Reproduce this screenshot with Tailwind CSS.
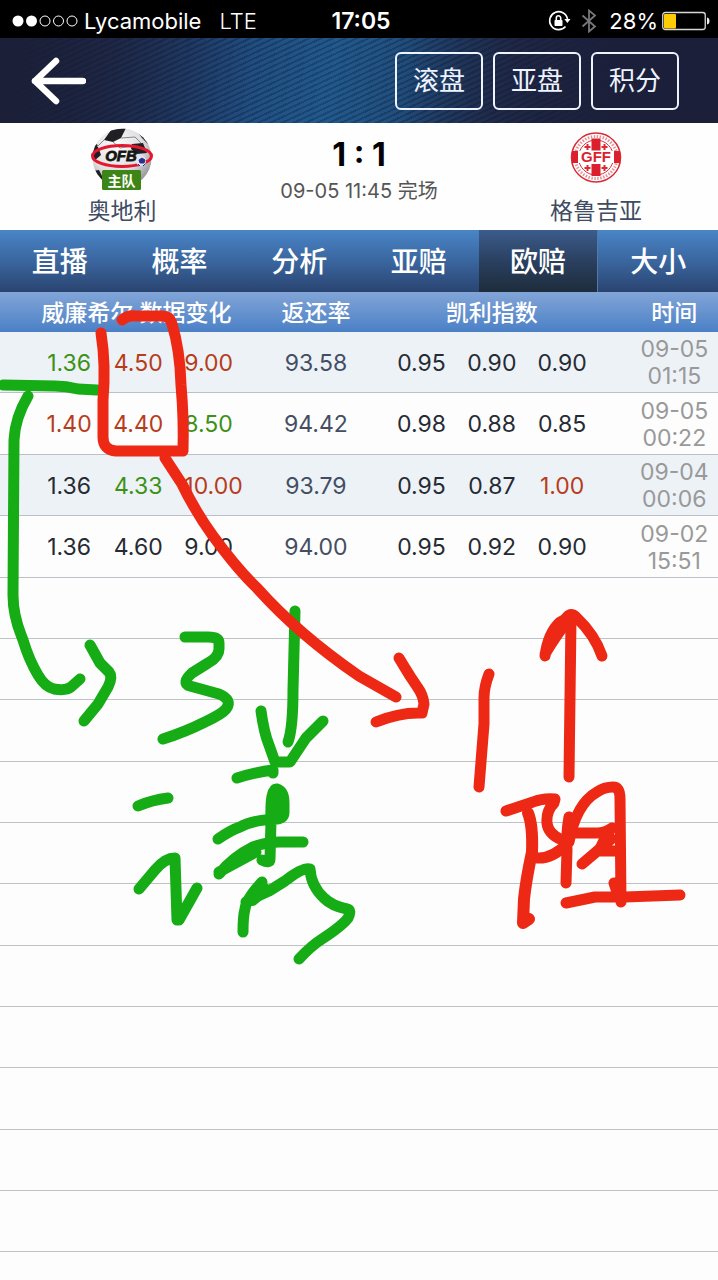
<!DOCTYPE html>
<html lang="zh-CN">
<head>
<meta charset="utf-8">
<meta name="viewport" content="width=device-width, initial-scale=1">
<title>奥地利 1:1 格鲁吉亚</title>
<script src="https://cdn.jsdelivr.net/npm/@tailwindcss/browser@4"></script>
</head>
<body class="relative min-h-screen overflow-x-hidden bg-[#fdfdfd] font-['Inter','Noto_Sans_CJK_SC',sans-serif]">

<!-- Status bar -->
<div class="grid h-[38px] grid-cols-[1fr_auto_1fr] items-center bg-black pt-1 pr-2 pl-3 text-[22px] leading-8 text-white">
  <div class="flex items-center">
    <svg class="h-3 w-[66px]" viewBox="0 0 66 12" fill="none" stroke="#fff">
      <circle cx="6" cy="6" r="5.5" fill="#fff" stroke="none"/><circle cx="19.5" cy="6" r="5.5" fill="#fff" stroke="none"/>
      <circle cx="33" cy="6" r="5"/><circle cx="46.500" cy="6" r="5"/><circle cx="60" cy="6" r="5"/>
    </svg>
    <span class="ml-1.5">Lycamobile</span>
    <span class="ml-[18px] font-light">LTE</span>
  </div>
  <span class="text-[23px] font-semibold">17:05</span>
  <div class="flex items-center justify-end">
    <svg class="h-6 w-6" viewBox="0 0 24 24" fill="none" stroke="#fff" stroke-width="1.6">
      <path d="M18.500 17.500A9 9 0 1 1 20.500 10"/>
      <path d="M17.300 10H23.500L20.400 14Z" fill="#fff" stroke="none"/>
      <rect x="7.500" y="11" width="8" height="6" rx=".8" fill="#fff" stroke="none"/>
      <path d="M9.300 11V9a2.200 2.200 0 0 1 4.400 0v2"/>
    </svg>
    <svg class="ml-2.5 h-6 w-4" viewBox="0 0 16 24" fill="none" stroke="#77777c" stroke-width="1.800"><path d="M1.500 6.500L14 17.500L8 22.500V1.500L14 6.500L1.500 17.500"/></svg>
    <span class="ml-3">28%</span>
    <svg class="ml-1 h-5 w-12" viewBox="0 0 48 20">
      <rect x=".75" y="1.500" width="42.500" height="17" rx="2.500" fill="none" stroke="#d8d8d8" stroke-width="1.300"/>
      <rect x="2" y="3" width="12" height="14.500" rx="1" fill="#ffcb05"/>
      <path d="M45 6.500q2.500 .5 2.500 3.500t-2.500 3.500z" fill="#eee"/>
    </svg>
  </div>
</div>

<!-- Title bar -->
<header class="flex h-[85px] items-center justify-between bg-[linear-gradient(90deg,#1b1f38_0%,#1b1f3800_35%,#1b1f3800_55%,#1b1f3a_85%),repeating-linear-gradient(155deg,#00000026_0_2px,#ffffff08_2px_5px),linear-gradient(100deg,#1b1f38_0%,#1a2a50_15%,#1b4478_32%,#1c5488_46%,#1b4878_56%,#1c2c50_70%,#1b1f3a_100%)] pr-[39px] pl-[30px]">
  <button type="button" aria-label="返回" class="h-12 w-14">
    <svg class="h-12 w-14" viewBox="0 0 56 48" fill="none" stroke="#fff" stroke-width="6.500" stroke-linecap="round" stroke-linejoin="round"><path d="M26 4L5 24L26 44M5 24H53"/></svg>
  </button>
  <div class="flex gap-[10px] text-[26px] text-[#edf3ff]">
    <button type="button" class="h-[58px] w-[88px] rounded-md border-2 border-[#edf3ff]">滚盘</button>
    <button type="button" class="h-[58px] w-[88px] rounded-md border-2 border-[#edf3ff]">亚盘</button>
    <button type="button" class="h-[58px] w-[88px] rounded-md border-2 border-[#edf3ff]">积分</button>
  </div>
</header>

<!-- Match summary -->
<section class="grid h-[107px] grid-cols-[244px_1fr_244px] bg-[#fefefe] text-[#3f4c62]">
  <div class="flex flex-col items-center pt-1">
    <svg class="h-[66px] w-[66px]" viewBox="0 0 66 66">
      <defs>
        <radialGradient id="ball" cx=".4" cy=".3" r=".75"><stop offset="0" stop-color="#fff"/><stop offset=".6" stop-color="#dedee0"/><stop offset="1" stop-color="#8a8a90"/></radialGradient>
        <clipPath id="ballclip"><circle cx="33" cy="31" r="29.500"/></clipPath>
      </defs>
      <circle cx="33" cy="31" r="29.500" fill="url(#ball)"/>
      <g clip-path="url(#ballclip)" fill="#202024">
        <path d="M22 3L37 1L32 11L24 15L15 13Z"/>
        <path d="M43 17L54 16L58 26L48 27L42 22Z"/>
        <path d="M2 21L8 17L12 28L5 34Z"/>
        <path d="M3 44L10 43L15 53L9 56Z"/>
        <path d="M47 3L57 9L61 19L53 11Z"/>
        <path d="M15 13L8 20M24 15L31 21L43 19M32 11L46 10L52 16" fill="none" stroke="#888" stroke-width="1"/>
      </g>
      <ellipse cx="33" cy="29" rx="29.500" ry="10.500" fill="none" stroke="#e5162d" stroke-width="3"/>
      <text x="32" y="34" text-anchor="middle" font-family="Liberation Sans" font-size="15" font-weight="700" font-style="italic" fill="#151515" stroke="#151515" stroke-width=".8">OFB</text>
      <circle cx="52" cy="34" r="5" fill="#e8e8f4"/><path d="M50 33l3-2 3 2-1 3h-4zM49 37l2 2M56 37l-2 2" fill="#283090" stroke="#283090"/>
      <rect x="13" y="43" width="39" height="20" rx="1.500" fill="#3d8516"/>
      <text x="32.500" y="58.500" text-anchor="middle" font-family="Noto Sans CJK SC" font-size="14" font-weight="700" fill="#fff">主队</text>
    </svg>
    <span class="mt-1 text-[23px] leading-7">奥地利</span>
  </div>
  <div class="flex flex-col items-center pt-[14px]">
    <strong class="text-[32px] leading-9 font-bold text-black">1 : 1</strong>
    <span class="mt-1.5 text-[20px] leading-6 text-[#555]">09-05 11:45 完场</span>
  </div>
  <div class="flex flex-col items-center pt-1">
    <svg class="h-[66px] w-[66px]" viewBox="0 0 66 66">
      <circle cx="33" cy="30.500" r="24.500" fill="#fff" stroke="#d92a35" stroke-width="1.500"/>
      <circle cx="33" cy="30.500" r="21" fill="none" stroke="#e8929a" stroke-width="3" stroke-dasharray="1.500 1.500"/>
      <circle cx="33" cy="30.500" r="17.500" fill="#fff" stroke="#d92a35"/>
      <path d="M28.500 11.500h9v12h-9zM28.500 37h9v12h-9zM9 24h7v12H9zM50 24h7v12h-7z" fill="#dc1f2d"/>
      <path d="M24.500 17v6M21.500 20h6M41.500 17v6M38.500 20h6M24.500 38v6M21.500 41h6M41.500 38v6M38.500 41h6" stroke="#d92a35" stroke-width="2"/>
      <rect x="15" y="24" width="36" height="12" fill="#fff"/>
      <text x="33" y="35" text-anchor="middle" font-family="Liberation Sans" font-size="15" font-weight="700" fill="#dc1f2d">GFF</text>
    </svg>
    <span class="mt-1 text-[23px] leading-7">格鲁吉亚</span>
  </div>
</section>

<!-- Section tabs -->
<nav class="grid h-[62px] grid-cols-6 bg-linear-to-b from-[#4985c7] via-[#3a669f] to-[#2a4470] pt-0 text-[28px] font-medium text-white">
  <a href="#live" class="flex items-center justify-center pt-0.5">直播</a>
  <a href="#odds" class="flex items-center justify-center pt-0.5">概率</a>
  <a href="#analysis" class="flex items-center justify-center pt-0.5">分析</a>
  <a href="#asian" class="flex items-center justify-center pt-0.5">亚赔</a>
  <a href="#euro" aria-current="page" class="flex items-center justify-center border-r border-[#5478a8] bg-linear-to-b from-[#3c5c8c] via-[#2a4060] to-[#1e2c3c] pt-0.5">欧赔</a>
  <a href="#size" class="flex items-center justify-center pt-0.5">大小</a>
</nav>

<!-- Odds history -->
<table class="w-full table-fixed border-separate border-spacing-0 text-center text-[23px] text-[#262b33]">
  <colgroup>
    <col class="w-[14.500%]"><col class="w-[9.500%]"><col class="w-[14%]"><col class="w-[12%]">
    <col class="w-[13.500%]"><col class="w-[10%]"><col class="w-[13.500%]"><col class="w-[13%]">
  </colgroup>
  <thead class="bg-linear-to-b from-[#82a5d7] to-[#4a80c6] leading-8 text-white">
    <tr class="h-10">
      <th scope="colgroup" colspan="3" class="p-0 pt-0.5 font-medium">威廉希尔 数据变化</th>
      <th scope="col" class="p-0 pt-0.5 font-medium">返还率</th>
      <th scope="colgroup" colspan="3" class="p-0 pt-0.5 font-medium">凯利指数</th>
      <th scope="col" class="p-0 pt-0.5 pl-[6px] font-medium">时间</th>
    </tr>
  </thead>
  <tbody class="[&_td]:border-b [&_td]:border-[#bcc0c6]">
    <tr class="h-[61px] bg-[#edf2f7]">
      <td class="p-0 pt-0.5 pl-[34px] text-[#3c9116]">1.36</td><td class="p-0 pt-0.5 text-[#b73c1c]">4.50</td><td class="p-0 pt-0.5 pl-3 text-left text-[#b73c1c]">9.00</td>
      <td class="p-0 pt-0.5 text-[#444e62]">93.58</td>
      <td class="p-0 pt-0.5 pl-7">0.95</td><td class="p-0 pt-0.5">0.90</td><td class="p-0 pt-0.5 pr-7">0.90</td>
      <td class="p-0 pt-0.5 pl-[6px] leading-[27px] text-[#999]">09-05<br>01:15</td>
    </tr>
    <tr class="h-[62px]">
      <td class="p-0 pt-0.5 pl-[34px] text-[#b73c1c]">1.40</td><td class="p-0 pt-0.5 text-[#b73c1c]">4.40</td><td class="p-0 pt-0.5 pl-3 text-left text-[#3c9116]">8.50</td>
      <td class="p-0 pt-0.5 text-[#444e62]">94.42</td>
      <td class="p-0 pt-0.5 pl-7">0.98</td><td class="p-0 pt-0.5">0.88</td><td class="p-0 pt-0.5 pr-7">0.85</td>
      <td class="p-0 pt-0.5 pl-[6px] leading-[27px] text-[#999]">09-05<br>00:22</td>
    </tr>
    <tr class="h-[61px] bg-[#edf2f7]">
      <td class="p-0 pt-0.5 pl-[34px]">1.36</td><td class="p-0 pt-0.5 text-[#3c9116]">4.33</td><td class="p-0 pt-0.5 pl-3 text-left text-[#b73c1c]">10.00</td>
      <td class="p-0 pt-0.5 text-[#444e62]">93.79</td>
      <td class="p-0 pt-0.5 pl-7">0.95</td><td class="p-0 pt-0.5">0.87</td><td class="p-0 pt-0.5 pr-7 text-[#b73c1c]">1.00</td>
      <td class="p-0 pt-0.5 pl-[6px] leading-[27px] text-[#999]">09-04<br>00:06</td>
    </tr>
    <tr class="h-[62px]">
      <td class="p-0 pt-0.5 pl-[34px]">1.36</td><td class="p-0 pt-0.5">4.60</td><td class="p-0 pt-0.5 pl-3 text-left">9.00</td>
      <td class="p-0 pt-0.5 text-[#444e62]">94.00</td>
      <td class="p-0 pt-0.5 pl-7">0.95</td><td class="p-0 pt-0.5">0.92</td><td class="p-0 pt-0.5 pr-7">0.90</td>
      <td class="p-0 pt-0.5 pl-[6px] leading-[27px] text-[#999]">09-02<br>15:51</td>
    </tr>
  </tbody>
</table>

<!-- Empty list rows -->
<div aria-hidden="true" class="[&>div]:h-[61px] [&>div]:border-b [&>div]:border-[#c0c3c6] [&>div:nth-child(3n)]:h-[62px]">
  <div></div><div></div><div></div><div></div><div></div><div></div><div></div><div></div><div></div><div></div><div></div>
</div>

<!-- Freehand pen marks over the page -->
<svg aria-hidden="true" class="pointer-events-none absolute top-0 left-0 h-auto w-full" viewBox="0 0 718 1280" fill="none" stroke-width="11" stroke-linecap="round" stroke-linejoin="round">
  <g stroke="#16ac15">
    <path d="M3 385L55 386Q66 386 78 389L97 390"/>
    <path d="M28 396Q15 418 14 440L13 595C13 618 20 632 23 640Q29 660 38 675Q45 687 54 689Q66 691 71 687L80 679"/>
    <path d="M90 645L100 663L109 672Q113 677 108 687L98 704L84 721"/>
    <path d="M185 637H208Q219 637 219 643V649Q219 657 208 663L192 673Q181 683 190 686L219 694Q233 700 226 709Q222 714 205 722Q185 732 163 739"/>
    <path d="M295 611L293 690Q293 728 288 742"/>
    <path d="M261 711Q264 733 269 745L275 762H290L306 738L323 721"/>
    <path d="M138 806Q152 800 168 798M237 778Q256 772 273 770V773"/>
    <path d="M139 889L155 870Q165 858 175 858L177 920H179L197 888"/>
    <path d="M262 860Q270 864 270 859L271 820Q270 788 277 789Q284 791 284 803V812Q284 818 277 819Q252 820 240 827Q231 830 218 839M277 792V815"/>
    <path d="M219 874Q233 857 253 847Q266 842 280 842H303M219 872L256 852L232 862"/>
    <path d="M262 882Q246 899 245 909Q243 916 243 932M246 902Q262 894 269 891L285 881Q303 867 310 869Q311 886 324 898Q332 906 347 909Q352 910 348 918Q342 926 322 939Q311 946 299 959"/>
    <path d="M252 899L263 889" stroke-width="14"/>
  </g>
  <g stroke="#ed2915">
    <path d="M122 320Q128 315 136 316H162Q170 316 172 324Q180 350 181 385Q184 420 183 451H116Q103 450 103 437V400Q106 365 101 333"/>
    <path d="M165 458L182 484Q195 511 213 536Q238 570 257 588Q298 634 359 676L396 697"/>
    <path d="M399 658Q405 668 410 676L418 688Q423 695 424 704L422 713Q400 712 376 722"/>
    <path d="M489 674Q484 687 484 698V724L479 787"/>
    <path d="M569 777L571 618"/>
    <path d="M545 656Q548 633 560 622Q565 620 567 617Q571 612 576 617Q595 635 602 656M545 654Q557 634 567 622L554 632"/>
    <path d="M506 811L533 802Q543 798 555 799L554 803Q546 811 547 823Q548 834 562 840L567 844Q552 859 537 858"/>
    <path d="M528 813Q533 825 532 852Q526 880 524 899L523 923L529 919" stroke-width="12"/>
    <path d="M569 817Q566 834 567 850L566 883M569 842Q576 804 597 792Q604 787 613 787Q620 787 620 799L621 902M577 833H597Q605 833 612 828M611 839L595 853L582 864M598 851H617M614 883L618 895"/>
    <path d="M608 834L602 847" stroke-width="13"/>
    <path d="M566 903L595 897H625L680 895"/>
  </g>
</svg>
</body>
</html>
